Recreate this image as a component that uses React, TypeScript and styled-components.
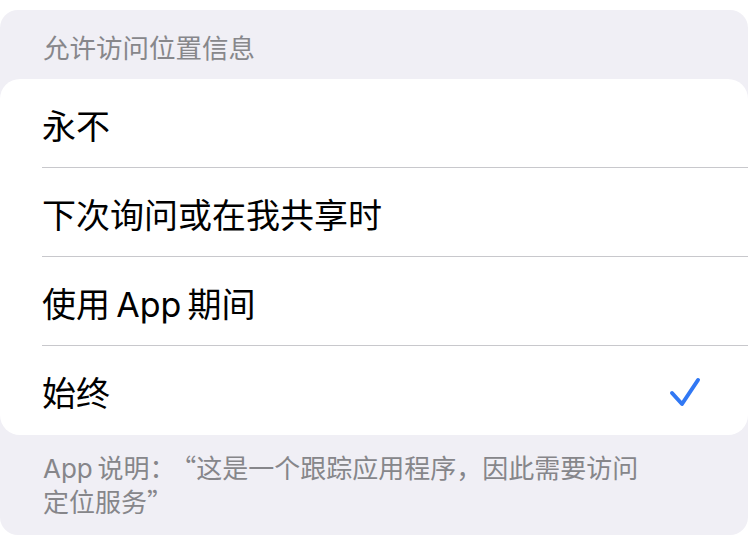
import React from 'react';
import styled, { createGlobalStyle } from 'styled-components';

const GlobalStyle = createGlobalStyle`
    body {
        margin: 0;
        background: #ffffff;
        font-family: Inter, "Noto Sans CJK SC", sans-serif;
        -webkit-font-smoothing: antialiased;
    }
`;

const Panel = styled.section`
    width: 748px;
    margin-top: 10px;
    padding: 22px 0 16px;
    background: #f0eff5;
    border-radius: 18px;
    box-sizing: border-box;
`;

const SectionTitle = styled.div`
    padding: 0 0 15px 43px;
    font-size: 26.5px;
    line-height: 32px;
    color: #87878b;
`;

const Card = styled.ul`
    list-style: none;
    margin: 0;
    padding: 0;
    background: #ffffff;
    border-radius: 20px;
    overflow: hidden;
`;

const Option = styled.li<{ last?: boolean }>`
    position: relative;
    height: 89px;
    display: flex;
    align-items: center;
    justify-content: space-between;
    padding: 2px 46px 0 42px;
    box-sizing: border-box;
    font-size: 34px;
    color: #000000;

    &::after {
        content: '';
        display: ${(p) => (p.last ? 'none' : 'block')};
        position: absolute;
        left: 42px;
        right: 0;
        bottom: 0;
        height: 1px;
        background: #c8c8cc;
    }
`;

const Footer = styled.p`
    margin: 0;
    padding: 16px 43px 0;
    font-size: 26px;
    line-height: 32px;
    color: #86868a;
`;

// opening quote gets a little air after the colon
const Quote = styled.span<{ open?: boolean }>`
    font-family: "Noto Sans CJK SC", sans-serif;
    margin-left: ${(p) => (p.open ? '0.3em' : '0')};
`;

const Check = () => (
    <svg width="34" height="34" viewBox="0 0 34 34">
        <path
            d="M4 18 L14 29 L30 5"
            fill="none"
            stroke="#3178f4"
            strokeWidth="4"
            strokeLinecap="round"
            strokeLinejoin="round"
        />
    </svg>
);

const options = ['永不', '下次询问或在我共享时', '使用\u2009App\u2009期间', '始终'];
const selected = 3;

const App = () => {
    return (
        <>
            <GlobalStyle />
            <Panel>
                <SectionTitle>允许访问位置信息</SectionTitle>
                <Card>
                    {options.map((label, i) => (
                        <Option key={label} last={i === options.length - 1}>
                            <span>{label}</span>
                            {i === selected && <Check />}
                        </Option>
                    ))}
                </Card>
                <Footer>
                    App{'\u2009'}说明：<Quote open>“</Quote>这是一个跟踪应用程序，因此需要访问
                    <br />
                    定位服务<Quote>”</Quote>
                </Footer>
            </Panel>
        </>
    );
};

export default App;
